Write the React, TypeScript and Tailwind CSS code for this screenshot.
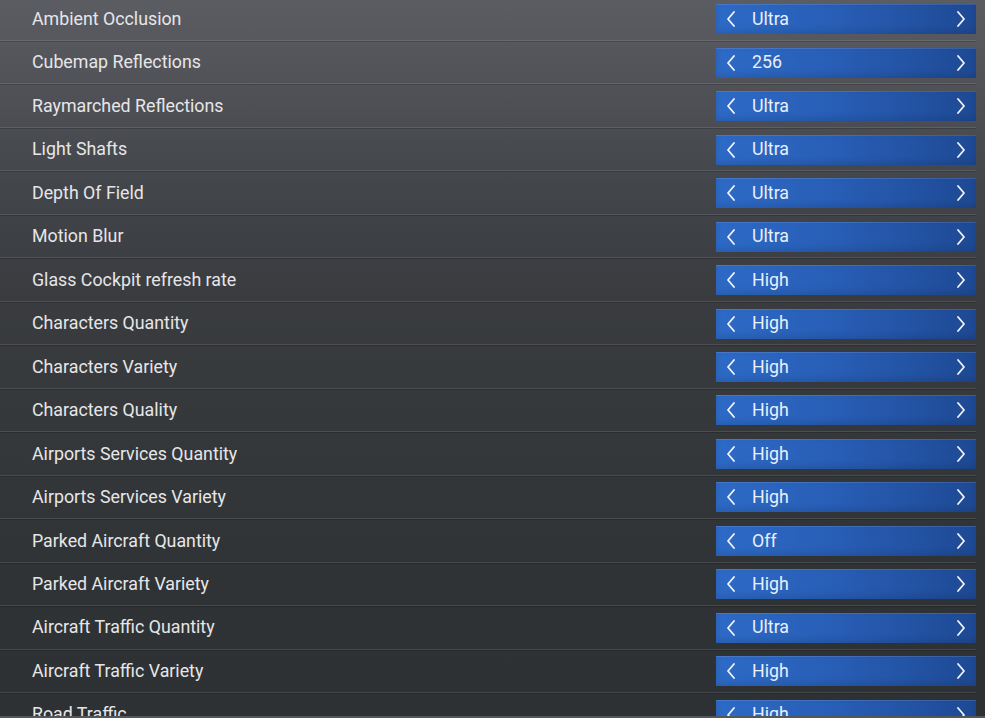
import React from "react";

const rows: [string, string][] = [
  ["Ambient Occlusion", "Ultra"],
  ["Cubemap Reflections", "256"],
  ["Raymarched Reflections", "Ultra"],
  ["Light Shafts", "Ultra"],
  ["Depth Of Field", "Ultra"],
  ["Motion Blur", "Ultra"],
  ["Glass Cockpit refresh rate", "High"],
  ["Characters Quantity", "High"],
  ["Characters Variety", "High"],
  ["Characters Quality", "High"],
  ["Airports Services Quantity", "High"],
  ["Airports Services Variety", "High"],
  ["Parked Aircraft Quantity", "Off"],
  ["Parked Aircraft Variety", "High"],
  ["Aircraft Traffic Quantity", "Ultra"],
  ["Aircraft Traffic Variety", "High"],
  ["Road Traffic", "High"],
];

function ChevLeft() {
  return (
    <svg width="10" height="16" viewBox="0 0 10 16" className="shrink-0">
      <polyline points="8,1 2,8 8,15" fill="none" stroke="#f2f5fa" strokeWidth="1.8" strokeLinecap="round" strokeLinejoin="round" />
    </svg>
  );
}

function ChevRight() {
  return (
    <svg width="10" height="16" viewBox="0 0 10 16" className="shrink-0">
      <polyline points="2,1 8,8 2,15" fill="none" stroke="#f2f5fa" strokeWidth="1.8" strokeLinecap="round" strokeLinejoin="round" />
    </svg>
  );
}

function Row({ label, value }: { label: string; value: string }) {
  return (
    <div>
      <div className="flex h-[41.47px] items-center justify-between pl-[32px]">
        <span className="text-[17.8px] text-[#e6e6e8]">{label}</span>
        <div className="flex h-[30px] w-[260px] items-center bg-[linear-gradient(90deg,#2d6ac6_0%,#285eb6_45%,#2251a1_80%,#1e4993_100%)] pl-[10px] pr-[10px] shadow-[inset_0_1px_0_rgba(255,255,255,0.12),inset_0_-3px_6px_rgba(0,0,0,0.12)]">
          <ChevLeft />
          <span className="ml-[16px] flex-1 text-[17.8px] text-[#e9eff9]">{value}</span>
          <ChevRight />
        </div>
      </div>
      <div className="h-px bg-[rgba(255,255,255,0.11)]" />
      <div className="h-px bg-[rgba(0,0,0,0.18)]" />
    </div>
  );
}

export default function App() {
  return (
    <div
      className="flex h-[718px] w-[985px] flex-col overflow-hidden bg-[linear-gradient(180deg,#5c5d62_0%,#4e5055_14%,#42454a_26%,#3a3c40_40%,#35383b_60%,#303335_80%,#2e3133_100%)]"
      style={{ fontFamily: "Roboto, 'Noto Sans', sans-serif" }}
    >
      <div className="flex-1 overflow-hidden pr-[9px]">
        <div className="-mt-[1.5px]">
          {rows.map(([l, v]) => (
            <Row key={l} label={l} value={v} />
          ))}
        </div>
      </div>
      <div className="h-[2px] shrink-0 bg-[#55585b]" />
    </div>
  );
}
